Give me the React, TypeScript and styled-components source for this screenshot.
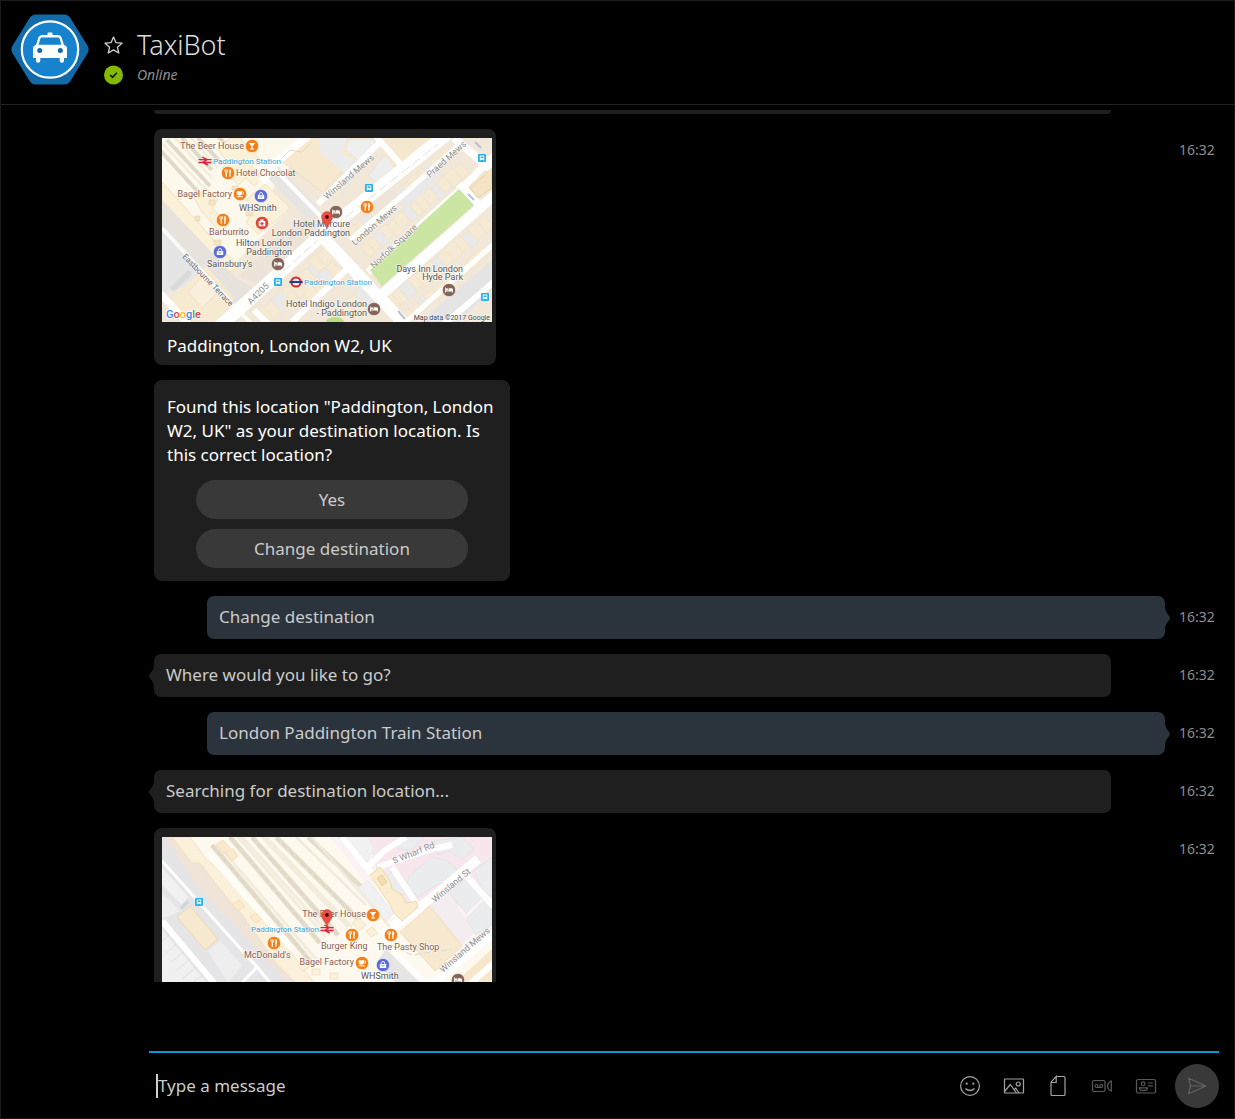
import React from "react";
import styled, { createGlobalStyle } from "styled-components";

const GlobalStyle = createGlobalStyle`
  * { box-sizing: border-box; }
  body { margin: 0; background: #000; }
  button, input { font: inherit; color: inherit; }
`;

const Shell = styled.div`
  display: flex;
  flex-direction: column;
  height: 100vh;
  overflow: hidden;
  border: 1px solid #1b1b1b;
  background: #000;
  color: #cbcbcb;
  font-family: "Noto Sans", "Open Sans", sans-serif;
  font-size: 17px;
  line-height: 24px;
`;

const Header = styled.header`
  display: flex;
  align-items: flex-start;
  gap: 15px;
  height: 104px;
  padding: 13px 10px 0;
  border-bottom: 1px solid #222;
  flex: none;
`;

const Identity = styled.div`
  display: grid;
  grid-template-columns: 19px 1fr;
  column-gap: 14px;
  row-gap: 2px;
  align-items: center;
  padding-top: 13px;
`;

const IconButton = styled.button<{ $dim?: boolean }>`
  display: flex;
  align-items: center;
  justify-content: center;
  padding: 0;
  border: 0;
  background: none;
  color: ${(p) => (p.$dim ? "#5a5a5a" : "#a4a4a4")};
`;

const FavoriteButton = styled(IconButton)`
  color: #cfcfcf;
`;

const BotName = styled.h1`
  margin: 0;
  font-size: 27px;
  font-weight: 300;
  line-height: 36px;
  color: #dcdcdc;
`;

const Presence = styled.span`
  font-size: 14px;
  font-style: italic;
  line-height: 20px;
  color: #8f8f8f;
`;

const Conversation = styled.main`
  display: flex;
  flex-direction: column;
  gap: 15px;
  flex: 1 1 0;
  min-height: 0;
  margin-top: 5px;
  padding: 0 19px 0 153px;
  overflow: hidden;
`;

const Row = styled.div`
  display: grid;
  grid-template-columns: 1fr 36px;
  column-gap: 14px;
  align-items: start;
  flex: none;
`;

const PreviousEdge = styled.div`
  height: 4px;
  margin-right: 54px;
  border-radius: 0 0 8px 8px;
  background: #1f1f1f;
`;

const Bubble = styled.div<{ $own?: boolean }>`
  position: relative;
  height: 43px;
  padding: 9px 12px;
  margin: ${(p) => (p.$own ? "0 0 0 53px" : "0 54px 0 0")};
  border-radius: 7px;
  background: ${(p) => (p.$own ? "#2b333c" : "#1f1f1f")};
`;

const TailShape = styled.svg<{ $own?: boolean }>`
  position: absolute;
  top: 10px;
  ${(p) => (p.$own ? "right: -5px;" : "left: -5px; transform: scaleX(-1);")}
`;

const Time = styled.time`
  padding-top: 11px;
  font-size: 14px;
  line-height: 20px;
  white-space: nowrap;
  color: #8d8d8d;
`;

const MapCard = styled.figure`
  width: 342px;
  margin: 0;
  padding: 9px 4px 7px 8px;
  border-radius: 8px;
  background: #1f1f1f;
  color: #fff;
  svg { display: block; }
`;

const MapCaption = styled.figcaption`
  padding: 12px 5px 0;
`;

const PromptCard = styled.section`
  width: 356px;
  padding: 15px 13px 13px;
  border-radius: 8px;
  background: #1f1f1f;
  p { margin: 0 0 13px; color: #fff; }
`;

const Choices = styled.div`
  display: flex;
  flex-direction: column;
  gap: 10px;
  padding: 0 29px;
`;

const Choice = styled.button`
  height: 39px;
  border: 0;
  border-radius: 20px;
  background: #393939;
  color: #cbcbcb;
`;

const Composer = styled.form`
  display: flex;
  align-items: center;
  gap: 18px;
  flex: none;
  height: 67px;
  margin: 69px 15px 0 148px;
  padding-left: 7px;
  border-top: 2px solid #0a97d6;
`;

const Field = styled.label`
  display: flex;
  flex: 1;
  height: 24px;
  border-left: 2px solid #cfcfcf;
`;

const MessageInput = styled.input`
  width: 100%;
  padding: 0;
  border: 0;
  outline: 0;
  background: none;
  caret-color: transparent;
  &::placeholder { color: #cbcbcb; opacity: 1; }
`;

const Tools = styled.div`
  display: flex;
  align-items: center;
  gap: 22px;
`;

const SendButton = styled.button`
  display: flex;
  align-items: center;
  justify-content: center;
  width: 44px;
  height: 44px;
  padding: 0;
  border: 0;
  border-radius: 50%;
  background: #393939;
  color: #626262;
`;

/* ---------- map drawing ---------- */

type Kind = "food" | "drink" | "cup" | "shop" | "health" | "hotel" | "bus" | "rail" | "tube";
type Tone = "brown" | "dark" | "blue" | "road" | "terrace" | "note";
type MarkerData = [Kind, number, number];
type LabelData = [string, number, number, Tone, ("start" | "end")?, number?];

const toneStyle: Record<Tone, { fill: string; size: number }> = {
  brown: { fill: "#8a5c4c", size: 9 },
  dark: { fill: "#5b5654", size: 9 },
  blue: { fill: "#35a3dc", size: 8 },
  road: { fill: "#8f8f8f", size: 9 },
  terrace: { fill: "#66615e", size: 8 },
  note: { fill: "#444", size: 7 },
};

const discColor: Record<string, string> = {
  food: "#f57f17",
  drink: "#f57f17",
  cup: "#f57f17",
  shop: "#5c6bdb",
  health: "#db4437",
  hotel: "#866558",
};

const Marker = ({ kind, x, y }: { kind: Kind; x: number; y: number }) => (
  <g transform={`translate(${x} ${y})`}>
    {discColor[kind] && <circle r="6.6" fill={discColor[kind]} stroke="#fff" strokeWidth=".5" />}
    {kind === "food" && (
      <g stroke="#fff" fill="none">
        <path d="M-1.7 -.5V3.8M1.9 -3.6V3.8" strokeWidth="1.3" />
        <path d="M-3 -3.7V-1.2Q-1.7 .3 -.4 -1.2V-3.7M-1.7 -3.7V0" strokeWidth=".8" />
        <path d="M1.9 -3.6Q3.4 -2 2.5 .2H1.9" fill="#fff" strokeWidth=".6" />
      </g>
    )}
    {kind === "drink" && <path d="M-3.2 -3H3.2L.6 .3V2.5H2V3.4H-2V2.5H-.6V.3Z" fill="#fff" />}
    {kind === "cup" && (
      <g>
        <path d="M-3.3 -2.7H2V-.2Q1.7 1.5 0 1.5H-1.5Q-3.2 1.4 -3.3 -.2ZM-3.3 2.3H2.8V3.2H-3.3Z" fill="#fff" />
        <path d="M2 -2H3.5V0H2" fill="none" stroke="#fff" strokeWidth=".7" />
      </g>
    )}
    {kind === "shop" && (
      <g>
        <path d="M-3.2 -.9H3.2V3H-3.2Z" fill="#fff" />
        <path d="M-1.7 -.9V-1.8Q-1.5 -3.5 0 -3.5Q1.5 -3.5 1.7 -1.8V-.9" fill="none" stroke="#fff" strokeWidth=".9" />
        <path d="M-1.5 .4Q0 2.3 1.5 .4" fill="none" stroke="#5c6bdb" strokeWidth=".7" />
      </g>
    )}
    {kind === "health" && (
      <g>
        <path d="M-3.3 -2H3.3V3.2H-3.3ZM-1.6 -3.6H1.6V-2H-1.6Z" fill="#fff" />
        <path d="M0 -1V2.4M-1.7 .7H1.7" stroke="#db4437" strokeWidth="1.2" />
      </g>
    )}
    {kind === "hotel" && (
      <path d="M-4 -2.6H-3.2V.6H-.4V-1.7H2.6Q4 -1.6 4 0V2.5H3.2V1.5H-3.2V2.5H-4ZM-2 -1.8A1 1 0 1 1 -2 .3A1 1 0 1 1 -2 -1.8Z" fill="#fff" />
    )}
    {kind === "bus" && (
      <g>
        <rect x="-4" y="-4" width="8" height="8" rx="1" fill="#27b0f0" />
        <path d="M-2.2 -2.6H2.2V2.4H1.4V1.7H-1.4V2.4H-2.2Z" fill="#fff" />
        <path d="M-1.4 -1.5H1.4V.1H-1.4Z" fill="#27b0f0" />
      </g>
    )}
    {kind === "rail" && (
      <path d="M-6.5 -1.4H6.5M-6.5 1.5H6.5M-2.8 -4L2.2 -1.4L-2.2 1.5L2.8 4" fill="none" stroke="#e0213c" strokeWidth="1.4" />
    )}
    {kind === "tube" && (
      <g>
        <circle r="4.6" fill="#fff" stroke="#dd2131" strokeWidth="2" />
        <path d="M-6.6 0H6.6" stroke="#1c3f94" strokeWidth="2.2" />
      </g>
    )}
  </g>
);

const Pin = ({ x, y }: { x: number; y: number }) => (
  <g transform={`translate(${x} ${y})`}>
    <path d="M0 0C-.6 -5 -5.4 -7.2 -5.4 -12A5.4 5.4 0 0 1 5.4 -12C5.4 -7.2 .6 -5 0 0Z" fill="#ea4f45" stroke="#c2352d" strokeWidth=".5" />
    <circle cy="-12" r="1.9" fill="#4a1010" />
  </g>
);

const Labels = ({ items }: { items: LabelData[] }) => (
  <g fontFamily="Roboto, sans-serif">
    {items.map(([text, x, y, tone, anchor = "start", angle = 0]) => (
      <text
        key={`${text}${x}-${y}`}
        transform={`translate(${x} ${y}) rotate(${angle})`}
        textAnchor={anchor}
        fill={toneStyle[tone].fill}
        fontSize={toneStyle[tone].size}
        stroke="#fff"
        strokeOpacity=".6"
        strokeWidth="1.4"
        paintOrder="stroke"
      >
        {text}
      </text>
    ))}
  </g>
);

const Markers = ({ items }: { items: MarkerData[] }) => (
  <g>
    {items.map(([kind, x, y]) => (
      <Marker key={`${kind}${x}-${y}`} kind={kind} x={x} y={y} />
    ))}
  </g>
);

const streetLabels: LabelData[] = [
  ["Winsland Mews", 165, 62, "road", "start", -41],
  ["Praed Mews", 268, 40, "road", "start", -42],
  ["London Mews", 193, 108, "road", "start", -41],
  ["Norfolk Square", 212, 131, "road", "start", -43],
  ["A4205", 89, 167, "road", "start", -45],
  ["Eastbourne Terrace", 20, 119, "terrace", "start", 46],
];

const streetPlaces: LabelData[] = [
  ["The Beer House", 82, 11, "brown", "end"],
  ["Paddington Station", 51, 26, "blue"],
  ["Hotel Chocolat", 74, 38, "brown"],
  ["Bagel Factory", 70, 59, "brown", "end"],
  ["WHSmith", 77, 73, "dark"],
  ["Barburrito", 47, 97, "brown"],
  ["Hotel Mercure", 188, 89, "dark", "end"],
  ["London Paddington", 188, 98, "dark", "end"],
  ["Hilton London", 130, 108, "dark", "end"],
  ["Paddington", 130, 117, "dark", "end"],
  ["Sainsbury's", 45, 129, "dark"],
  ["Paddington Station", 142, 147, "blue"],
  ["Hotel Indigo London", 205, 169, "dark", "end"],
  ["- Paddington", 205, 178, "dark", "end"],
  ["Days Inn London", 301, 134, "dark", "end"],
  ["Hyde Park", 301, 142, "dark", "end"],
  ["Map data ©2017 Google", 328, 182, "note", "end"],
];

const streetMarkers: MarkerData[] = [
  ["drink", 90, 8],
  ["rail", 43, 23],
  ["food", 66, 35],
  ["cup", 78, 56],
  ["shop", 99, 58],
  ["food", 61, 82],
  ["health", 100, 85],
  ["shop", 58, 114],
  ["hotel", 116, 126],
  ["bus", 116, 144],
  ["tube", 134, 144],
  ["hotel", 212, 171],
  ["hotel", 287, 152],
  ["bus", 323, 159],
  ["bus", 320, 20],
  ["bus", 207, 50],
  ["food", 205, 69],
  ["hotel", 174, 74],
];

const googleLetters: [string, string][] = [
  ["G", "#4285f4"],
  ["o", "#ea4335"],
  ["o", "#fbbc05"],
  ["g", "#4285f4"],
  ["l", "#34a853"],
  ["e", "#ea4335"],
];

/* A terrace of narrow plots that runs from (x, y) along the street grid. */
const Terrace = ({ x, y, angle, plots, depth }: { x: number; y: number; angle: number; plots: number[]; depth: number }) => {
  let offset = 0;
  return (
    <g transform={`translate(${x} ${y}) rotate(${angle})`} stroke="#eddfc4" strokeWidth=".5">
      {plots.map((w, i) => {
        const at = offset;
        offset += w;
        return <rect key={i} x={at} y={i % 3 === 1 ? 1.5 : 0} width={w} height={depth - (i % 2) * 2} fill={i % 4 === 2 ? "#e9e9ea" : "#f6ead4"} />;
      })}
    </g>
  );
};

const StreetMap = () => (
  <svg width="330" height="184" viewBox="0 0 330 184" role="img" aria-label="Map of Paddington">
    <rect width="330" height="184" fill="#f2e8da" />
    <path d="M0 0H150L110 52L128 70L66 132L0 70Z" fill="#fdf8ec" />
    <g stroke="#e0d9ca" strokeWidth="4">
      <path d="M-2 12L38 56M5 2L48 48M20 0L50 32M36 0L60 26M56 -2L76 20" />
      <path d="M0 5L44 52M13 0L50 40M29 0L56 30" stroke="#f1ebdc" strokeWidth="2" />
    </g>
    <g fill="#fbf0d8" stroke="#edd9b2" strokeWidth=".7">
      <path d="M78 0L97 20L90 28L101 40L92 48L84 40L76 47L60 30L66 24L56 12L68 0Z" />
      <path d="M0 44L18 64L27 74L36 84L48 98L60 112L78 128L64 136L44 116L22 92L0 66Z" />
      <path d="M44 50L56 62L50 70L66 86L58 94L40 74L32 60Z" />
      <path d="M103 46L128 70L112 84L96 96L84 84L92 72L84 62Z" />
    </g>
    <path d="M47 62h6v5h-6zM70 48h6v4h-6zM84 72h7v6h-7zM33 78h5v5h-5zM52 102h7v5h-7zM72 92h6v5h-6z" fill="#f3e4c3" stroke="#e9d5ae" strokeWidth=".6" />
    <path d="M0 62L74 140L96 152L72 170L0 92Z" fill="#e8e2dc" />
    <path d="M0 92L44 140L0 156Z" fill="#e5e5e6" />
    <path d="M8 150L26 132L30 136L12 154Z" fill="#d9dadb" />
    <path d="M28 184L8 162L44 128L72 160L56 184Z" fill="#f6ead1" />
    <path d="M44 134L60 150L40 170L26 154Z" fill="#f9efdc" stroke="#ecd8b2" strokeWidth=".7" />
    <path d="M76 138L140 80L160 88L100 148Z" fill="#ece3d9" />
    <path d="M104 120L160 74" stroke="#ddd5cb" strokeDasharray="7 3" />
    {/* blocks north-east of the station */}
    <path d="M146 0H212L160 54L118 22Z" fill="#f7e9cf" stroke="#eedab4" strokeWidth=".7" />
    <path d="M106 40L116 28L158 72L146 82Z" fill="#e7e5e3" />
    <path d="M158 0H184L180 16L202 26L188 40L158 14Z" fill="#ececec" />
    <path d="M186 2H212L214 14L196 22L184 12Z" fill="#efefef" stroke="#e0e0e0" strokeWidth=".6" />
    <path d="M206 38L222 18L232 24L236 32L218 46Z" fill="#eeeded" stroke="#dfdfdf" strokeWidth=".6" />
    <path d="M224 0H276L234 34L222 14Z" fill="#f5e8cf" />
    <path d="M100 44L112 26L146 -2" stroke="#fff" strokeWidth="8" fill="none" />
    <path d="M110 28L164 84" stroke="#fff" strokeWidth="4" />
    <path d="M156 66L220 2M210 -6L240 28" stroke="#fff" strokeWidth="6" />
    <path d="M120 20L128 12L140 14L150 4" stroke="#ecdab8" fill="none" />
    {/* terraces between Praed Street and the mews */}
    <Terrace x={186} y={92} angle={-40} plots={[9, 7, 11, 8, 12, 9, 13, 8, 12, 8, 10, 9, 14]} depth={13} />
    <Terrace x={198} y={108} angle={-40} plots={[8, 8, 10, 8, 9, 12, 9, 7, 9, 11, 8, 10, 12, 9]} depth={15} />
    <Terrace x={212} y={128} angle={-40} plots={[9, 9, 7, 9, 8, 10, 9, 11]} depth={10} />
    <path d="M234 60L266 32L276 42L244 70Z" fill="#e9e9ea" />
    <path d="M194 62L218 42L236 56L214 76Z" fill="#ede4da" />
    <path d="M188 102L240 58L300 4" stroke="#fff" strokeWidth="5" fill="none" />
    {/* Norfolk Square and its south side */}
    <path d="M206 134L300 50L332 18" stroke="#fff" strokeWidth="7" fill="none" />
    <path d="M216 160L336 54" stroke="#fff" strokeWidth="10" />
    <path d="M297 46L318 68M292 0L332 34" stroke="#fff" strokeWidth="8" />
    <path d="M308 50L330 30V50L316 60Z" fill="#f4e4c4" stroke="#e9d3a4" />
    <path d="M297 51L312 67L220 148L208 132Z" fill="#cbe6a3" />
    <Terrace x={222} y={162} angle={-40} plots={[10, 9, 12, 8, 10, 11, 9, 10, 12, 9, 10, 12, 9]} depth={15} />
    <Terrace x={238} y={178} angle={-40} plots={[12, 10, 9, 11, 13, 10, 9, 12, 10, 12]} depth={11} />
    <path d="M258 184L332 120V150L296 184Z" fill="#e4e4e5" />
    <path d="M244 184L334 104" stroke="#fff" strokeWidth="5" />
    <path d="M280 188L334 142" stroke="#fff" strokeWidth="6" />
    {/* south-west blocks */}
    <Terrace x={92} y={176} angle={-41} plots={[12, 10, 14, 9, 12, 13, 10, 14]} depth={17} />
    <Terrace x={146} y={122} angle={-41} plots={[9, 12, 10]} depth={16} />
    <Terrace x={138} y={152} angle={-41} plots={[12, 10, 12, 9]} depth={18} />
    <Terrace x={172} y={172} angle={-41} plots={[14, 12, 12]} depth={20} />
    <path d="M130 184L188 128M92 172L108 188" stroke="#fff" strokeWidth="6" />
    <path d="M0 90L72 168L90 186" stroke="#fff" strokeWidth="4" fill="none" opacity=".8" />
    <path d="M-2 155L28 188" stroke="#fff" strokeWidth="7" />
    <path d="M56 190L165 92L285 -4" stroke="#fff" strokeWidth="13" fill="none" />
    <path d="M100 152L165 94L276 6" stroke="#e3e0dc" strokeDasharray="10 4" fill="none" />
    <path d="M158 96L246 190" stroke="#fff" strokeWidth="12" />
    <path d="M236 173L243 181M313 4L319 10M306 56L312 62" stroke="#b9c0da" strokeWidth="2" />
    <ellipse cx="173" cy="184" rx="9" ry="5" fill="#b9de86" />
    <Labels items={streetLabels} />
    <Labels items={streetPlaces} />
    <Markers items={streetMarkers} />
    <Pin x={165} y={91} />
    <text x="4" y="180" fontFamily="Roboto, sans-serif" fontSize="11" fontWeight="500" stroke="#fff" strokeWidth="1.4" paintOrder="stroke">
      {googleLetters.map(([letter, color], i) => (
        <tspan key={i} fill={color}>{letter}</tspan>
      ))}
    </text>
  </svg>
);

const stationLabels: LabelData[] = [
  ["S Wharf Rd", 232, 27, "road", "start", -22],
  ["Winsland St", 273, 66, "road", "start", -40],
  ["Winsland Mews", 281, 136, "road", "start", -41],
  ["The Beer House", 204, 80, "brown", "end"],
  ["Paddington Station", 157, 95, "blue", "end"],
  ["McDonald's", 82, 121, "brown"],
  ["Burger King", 159, 112, "brown"],
  ["The Pasty Shop", 215, 113, "brown"],
  ["Bagel Factory", 192, 128, "brown", "end"],
  ["WHSmith", 199, 142, "dark"],
];

const stationMarkers: MarkerData[] = [
  ["bus", 37, 65],
  ["drink", 211, 78],
  ["rail", 165, 92],
  ["food", 112, 106],
  ["food", 190, 98],
  ["food", 229, 98],
  ["cup", 200, 126],
  ["shop", 221, 128],
  ["hotel", 296, 143],
];

const StationMap = () => (
  <svg width="330" height="184" viewBox="0 0 330 184" role="img" aria-label="Map of Paddington Station">
    <rect width="330" height="184" fill="#fdf9ef" />
    <path d="M0 0H14L150 162V184H0Z" fill="#e5e5e7" />
    <path d="M2 0H20L154 150L140 160L92 110L34 48Z" fill="#efe4d7" />
    <path d="M10 0H28L44 22L56 32L96 74L104 88L116 98L134 122L162 158L148 160L114 126L76 72L66 62L38 26L30 26Z" fill="#fbf0d9" stroke="#efdcb8" strokeWidth=".7" />
    <g fill="none">
      <path d="M50 8L150 126M68 0L158 106M90 0L176 98M114 0L198 84M146 0L208 58" stroke="#e4ddcb" strokeWidth="5" />
      <path d="M56 8L154 122M76 0L164 100M80 0L168 98M100 0L186 90M104 0L190 90M134 0L204 68" stroke="#f2ecdc" strokeWidth="3" />
      <path d="M50 8L150 126M68 0L158 106M90 0L176 98M114 0L198 84" stroke="#d9d1bb" strokeWidth="1" strokeDasharray="6 3" />
      <path d="M46 16L130 112" stroke="#fffdf6" strokeWidth="6" />
    </g>
    <path d="M54 8l7 -5 7 8 -6 5zM64 16l6 -5 6 8 -6 5zM70 68l7 -5 6 6 -7 5zM88 80l6 -4 6 6 -6 4z" fill="#fbe9cc" stroke="#efd7ae" strokeWidth=".7" />
    {/* left side */}
    <path d="M0 30L26 60L20 68L0 48Z" fill="#f1f1f1" />
    <path d="M0 56L18 74L0 82Z" fill="#efefef" />
    <path d="M18 70L25 63L27 66L20 73Z" fill="#cfd3dc" />
    <path d="M28 69L56 102L43 113L15 80Z" fill="#f6e9cf" stroke="#edd8ad" />
    <path d="M46 114L58 104L80 128L66 146Z" fill="#eeeeef" />
    <path d="M0 92L48 150H0Z" fill="#f0f0f0" />
    <path d="M0 104L12 94M4 116L20 102M8 126L27 110M14 134L34 117M20 142L41 125M30 146L46 134" stroke="#dcdcdd" strokeWidth=".8" />
    <path d="M0 84L52 146" stroke="#fff" strokeWidth="6" />
    <path d="M0 24L95 130L112 150M95 130L78 148" stroke="#fff" strokeWidth="3" fill="none" />
    {/* hospital quarter */}
    <path d="M168 0H330V94L296 120L262 66L214 62L186 22Z" fill="#fbf3f3" />
    <path d="M206 0H330V54L268 82L240 70L214 32Z" fill="#f7e6ec" />
    <path d="M176 0H206L212 12L204 26L192 18Z" fill="#f1f1f1" stroke="#e4e4e4" strokeWidth=".6" />
    <g fill="#ebecee" stroke="#dcdde0" strokeWidth=".6">
      <path d="M216 46L234 32L242 42L250 50L238 58L228 60Z" />
      <path d="M248 38L270 20L286 24L296 34L282 44L268 52L256 60L244 48Z" />
      <path d="M272 4L300 0L312 12L300 22L286 14L276 18Z" />
      <path d="M286 54L304 42L320 60L304 76Z" />
      <path d="M312 34L330 20V60L322 56Z" />
      <path d="M304 82L324 62L330 68V88L314 98Z" />
      <path d="M236 0H262L250 14L236 12Z" />
    </g>
    <path d="M262 68L286 54L312 96L300 108Z" fill="#f3edf0" />
    <path d="M206 30L222 14L244 0M216 30L270 12L290 8M230 30L262 78" stroke="#fff" strokeWidth="6" fill="none" />
    <path d="M300 34L332 70" stroke="#fff" strokeWidth="6" />
    <path d="M220 98L268 62L316 22" stroke="#fff" strokeWidth="9" fill="none" />
    <path d="M180 0L212 40L238 84" stroke="#fff" strokeWidth="6" fill="none" />
    <path d="M150 0L228 90" stroke="#f1eadd" strokeWidth="2" />
    <path d="M208 38L218 30L228 44L230 52L240 58L244 66L254 64L256 70L240 84L232 76L228 68Z" fill="#fbecd0" stroke="#ecd09a" strokeWidth=".8" />
    <path d="M215 41l5 -3 5 7 -5 4z" fill="#f3ddb4" stroke="#dec08a" strokeWidth=".6" />
    <path d="M206 44L232 76L224 84L196 50Z" fill="#f1f1f1" stroke="#dfdfdf" strokeWidth=".6" />
    <path d="M190 86l7 -5 7 7 -7 6zM204 94l6 -4 5 6 -6 4zM150 132h8v6h-8zM168 136h8v6h-8zM136 128l6 -4 5 6 -6 4z" fill="#fbf0d9" stroke="#efdcb8" strokeWidth=".7" />
    <path d="M268 69L300 109L273 134L238 95Z" fill="#f7e9cf" stroke="#eed7a8" strokeWidth=".7" />
    <path d="M224 112L262 150H238L214 126Z" fill="#e7e5e3" />
    <path d="M222 104L268 150" stroke="#fff" strokeWidth="5" />
    <path d="M262 154L334 94" stroke="#fff" strokeWidth="8" />
    <path d="M284 154L330 112V150Z" fill="#f6e7cb" />
    <path d="M300 154L334 124" stroke="#fff" strokeWidth="6" />
    <path d="M228 108L250 118L290 112" stroke="#ddd6e0" strokeDasharray="6 3" fill="none" />
    <Labels items={stationLabels} />
    <Markers items={stationMarkers} />
    <Pin x={165} y={90} />
  </svg>
);

/* ---------- icons ---------- */

const TaxiAvatar = () => (
  <svg width="78" height="71" viewBox="0 0 78 71" role="img" aria-label="TaxiBot avatar">
    <path d="M8 35.500L25 8H53L70 35.500L53 63H25Z" fill="#136aa8" stroke="#136aa8" strokeWidth="15" strokeLinejoin="round" />
    <circle cx="39" cy="35.500" r="28.200" fill="#1783cf" stroke="#fff" strokeWidth="2.200" />
    <path
      fillRule="evenodd"
      fill="#fff"
      d="M36.500 21V19.500Q36.500 18.500 37.500 18.500H40.500Q41.500 18.500 41.500 19.500V21H47Q49.800 21 50.600 23.500L53 31Q56 31.500 56 34.500V44H53V47Q53 48.800 51 48.800Q48.700 48.800 48.700 47V44H29.300V47Q29.300 48.800 27 48.800Q25 48.800 25 47V44H22V34.500Q22 31.500 25 31L27.400 23.500Q28.200 21 31 21ZM30.600 23.500Q29.700 23.500 29.400 24.500L27.600 30.800H50.400L48.600 24.500Q48.300 23.500 47.400 23.500Z"
    />
    <circle cx="28.700" cy="36.500" r="2.500" fill="#1369a9" />
    <circle cx="49.300" cy="36.500" r="2.500" fill="#1369a9" />
  </svg>
);

const StarIcon = () => (
  <svg width="19" height="18" viewBox="0 0 19 18" fill="none" stroke="currentColor" strokeWidth="1.300" strokeLinejoin="round">
    <path d="M9.500 1L12 6.700L18 7.200L13.400 11.200L14.800 17L9.500 13.900L4.200 17L5.600 11.200L1 7.200L7 6.700Z" />
  </svg>
);

const OnlineBadge = () => (
  <svg width="19" height="20" viewBox="0 0 19 20" role="img" aria-label="Available">
    <circle cx="9.500" cy="10" r="9.500" fill="#84b900" />
    <path d="M6.300 10L8.500 12.300L12.900 7.800" fill="none" stroke="#111" strokeWidth="1.600" />
  </svg>
);

const iconProps = { width: 22, height: 22, viewBox: "0 0 22 22", fill: "none", stroke: "currentColor", strokeWidth: 1.2 };

const SmileIcon = () => (
  <svg {...iconProps}>
    <circle cx="11" cy="11" r="9.400" />
    <path d="M6.500 13.500Q11 17.500 15.500 13.500" />
    <circle cx="7.700" cy="8.700" r="1.100" fill="currentColor" stroke="none" />
    <circle cx="14.300" cy="8.700" r="1.100" fill="currentColor" stroke="none" />
  </svg>
);

const PictureIcon = () => (
  <svg {...iconProps}>
    <rect x="1.500" y="4" width="19" height="14" rx=".5" />
    <path d="M1.500 16.500L7.300 9.500L13.500 18M11.300 14.500L12.800 13.200L16 18" />
    <circle cx="15.200" cy="9" r="2" />
  </svg>
);

const FileIcon = () => (
  <svg {...iconProps}>
    <path d="M9.200 1.500H16.500Q18 1.500 18 3V19.500Q18 20.500 17 20.500H5Q4 20.500 4 19.500V7.200L9.200 1.500V7.500H4" />
  </svg>
);

const VideoMessageIcon = () => (
  <svg {...iconProps}>
    <rect x="1.500" y="5.500" width="12.500" height="11" rx="1.500" />
    <circle cx="5.500" cy="11" r="1.500" />
    <circle cx="10.200" cy="11" r="1.500" />
    <path d="M5.500 12.500H10.200M20.300 6V16Q16.500 14.500 16.500 11Q16.500 8 20.300 6Z" />
  </svg>
);

const ContactIcon = () => (
  <svg {...iconProps}>
    <rect x="1.500" y="4.500" width="19" height="13.500" rx="1.500" />
    <circle cx="8.200" cy="8.700" r="1.800" />
    <path d="M4.300 12.800H12.500Q12.300 15.600 8.400 15.600Q4.500 15.600 4.300 12.800ZM13 8H17.800M13 10.800H17.800" />
  </svg>
);

const SendIcon = () => (
  <svg {...iconProps}>
    <path d="M2.500 3.200L20 11L2.500 18.800L4.500 11ZM4.500 11H20" strokeLinejoin="round" />
  </svg>
);

/* ---------- page ---------- */

const messages: { text: string; own?: boolean }[] = [
  { text: "Change destination", own: true },
  { text: "Where would you like to go?" },
  { text: "London Paddington Train Station", own: true },
  { text: "Searching for destination location..." },
];

const Message = ({ text, own }: { text: string; own?: boolean }) => (
  <Row>
    <Bubble $own={own}>
      {text}
      <TailShape $own={own} width="5" height="24" viewBox="0 0 5 24">
        <path d="M0 0C0 8 5 9 5 12C5 15 0 16 0 24Z" fill={own ? "#2b333c" : "#1f1f1f"} />
      </TailShape>
    </Bubble>
    <Time>16:32</Time>
  </Row>
);

export default function App() {
  return (
    <Shell>
      <GlobalStyle />
      <Header>
        <TaxiAvatar />
        <Identity>
          <FavoriteButton type="button" aria-label="Add to favourites">
            <StarIcon />
          </FavoriteButton>
          <BotName>TaxiBot</BotName>
          <OnlineBadge />
          <Presence>Online</Presence>
        </Identity>
      </Header>

      <Conversation>
        <Row>
          <PreviousEdge />
        </Row>
        <Row>
          <MapCard>
            <StreetMap />
            <MapCaption>Paddington, London W2, UK</MapCaption>
          </MapCard>
          <Time>16:32</Time>
        </Row>
        <Row>
          <PromptCard>
            <p>Found this location "Paddington, London W2, UK" as your destination location. Is this correct location?</p>
            <Choices>
              <Choice type="button">Yes</Choice>
              <Choice type="button">Change destination</Choice>
            </Choices>
          </PromptCard>
        </Row>
        {messages.map((m) => (
          <Message key={m.text} {...m} />
        ))}
        <Row>
          <MapCard>
            <StationMap />
          </MapCard>
          <Time>16:32</Time>
        </Row>
      </Conversation>

      <Composer onSubmit={(e) => e.preventDefault()}>
        <Field>
          <MessageInput type="text" placeholder="Type a message" aria-label="Type a message" />
        </Field>
        <Tools>
          <IconButton type="button" aria-label="Emoticons"><SmileIcon /></IconButton>
          <IconButton type="button" aria-label="Send picture"><PictureIcon /></IconButton>
          <IconButton type="button" aria-label="Send file"><FileIcon /></IconButton>
          <IconButton type="button" $dim aria-label="Video message"><VideoMessageIcon /></IconButton>
          <IconButton type="button" $dim aria-label="Send contact"><ContactIcon /></IconButton>
        </Tools>
        <SendButton type="submit" aria-label="Send"><SendIcon /></SendButton>
      </Composer>
    </Shell>
  );
}
